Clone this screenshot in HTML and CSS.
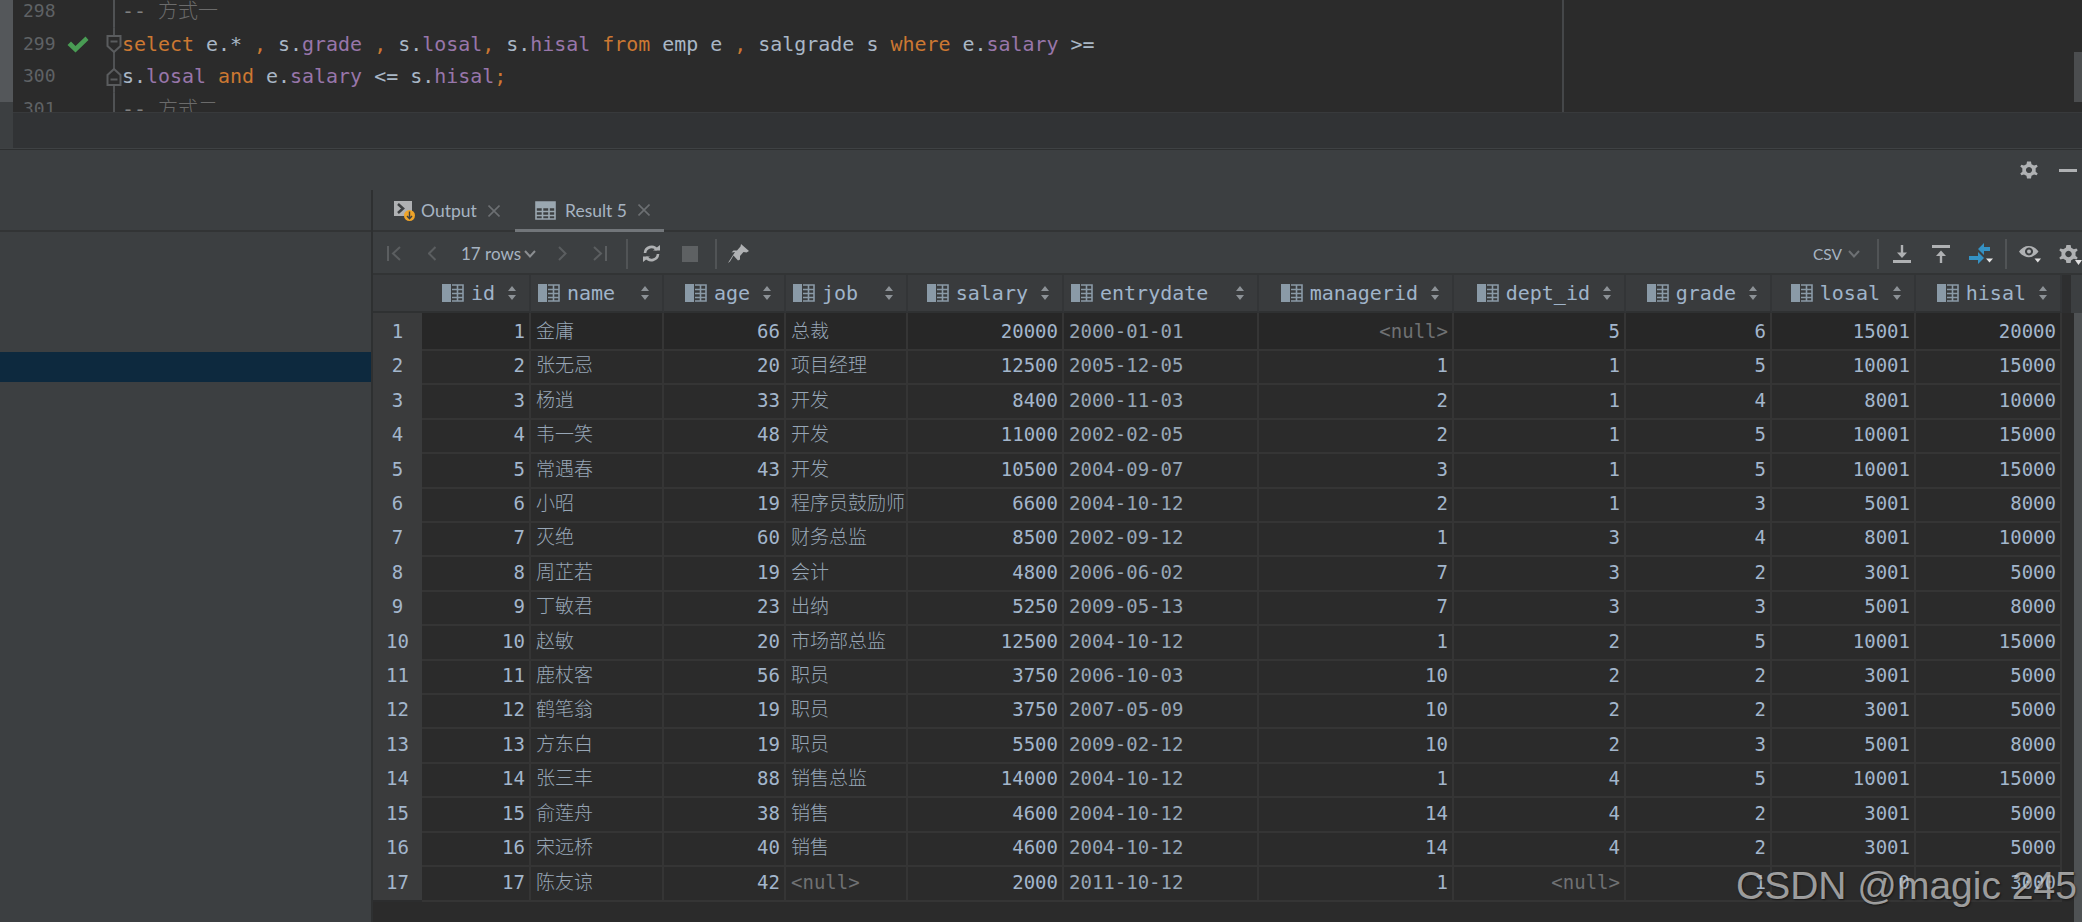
FILE: index.html
```html
<!DOCTYPE html>
<html lang="zh">
<head>
<meta charset="utf-8">
<title>Result 5</title>
<link rel="stylesheet" href="styles.css">
</head>
<body>
<svg class="defs" width="0" height="0" aria-hidden="true">
  <symbol id="col" viewBox="0 0 22 18">
    <rect x="0" y="0" width="9" height="18" fill="#8a9aa7"/>
    <path d="M10 1H21V17H10M10 5.5H21M10 9.5H21M10 13.5H21M15.5 1V17" fill="none" stroke="#8a9aa7" stroke-width="1.6"/>
  </symbol>
  <symbol id="sort" viewBox="0 0 8 14">
    <path d="M4 0L8 5H0ZM4 14L0 9H8Z" fill="#8c9196"/>
  </symbol>
  <symbol id="gear" viewBox="0 0 20 20">
    <g fill="#afb1b3">
      <path d="M10 0.5l2.2 0 .6 3 2.8 1.6 2.9-1 1.2 2-2.3 2 0 3.8 2.3 2-1.2 2-2.9-1-2.8 1.6-.6 3-4.4 0-.6-3-2.8-1.6-2.9 1-1.2-2 2.3-2 0-3.8-2.3-2 1.2-2 2.9 1 2.8-1.6.6-3z M10 6.6a3.4 3.4 0 1 0 .01 0z" fill-rule="evenodd"/>
    </g>
  </symbol>
</svg>

<section class="top">
  <div class="strip"><div class="strip-thumb"></div></div>
  <div class="top-main">
    <div class="editor">
      <div class="lines">
        <div class="line"><span class="ln">298</span><span class="mark"></span><span class="fold"></span><code class="code"><span class="cm">-- </span><span class="cmz">方式一</span></code></div>
        <div class="line"><span class="ln">299</span><span class="mark"><svg class="check" width="22" height="17" viewBox="0 0 22 17"><path d="M0.5 9L4 5.5L8.5 10L18.5 0.5L21.5 4L8.5 16.5Z" fill="#499c54"/></svg></span><span class="fold"><svg class="fold-ic" width="16" height="18" viewBox="0 0 16 18"><path d="M1.5 1H14.5V11L8 17L1.5 11Z M4.5 6.5H11.5" fill="#2b2b2b" stroke="#5a5c5e" stroke-width="2"/></svg></span><code class="code"><span class="kw">select</span> e.* <span class="kw">,</span> s.<span class="col">grade</span> <span class="kw">,</span> s.<span class="col">losal</span><span class="kw">,</span> s.<span class="col">hisal</span> <span class="kw">from</span> emp e <span class="kw">,</span> salgrade s <span class="kw">where</span> e.<span class="col">salary</span> &gt;=</code></div>
        <div class="line"><span class="ln">300</span><span class="mark"></span><span class="fold"><svg class="fold-ic" width="16" height="18" viewBox="0 0 16 18"><path d="M8 1L14.5 7V17H1.5V7Z M4.5 11.5H11.5" fill="#2b2b2b" stroke="#5a5c5e" stroke-width="2"/></svg></span><code class="code">s.<span class="col">losal</span> <span class="kw">and</span> e.<span class="col">salary</span> &lt;= s.<span class="col">hisal</span><span class="kw">;</span></code></div>
        <div class="line"><span class="ln">301</span><span class="mark"></span><span class="fold"></span><code class="code"><span class="cm">-- </span><span class="cmz">方式二</span></code></div>
      </div>
      <div class="margin-line"></div>
      <div class="ed-thumb"></div>
    </div>
    <div class="band"></div>
  </div>
</section>

<section class="panel">
  <div class="panel-bar">
    <svg class="pb-gear" width="18" height="20"><use href="#gear"/></svg>
    <span class="pb-min"></span>
  </div>
  <div class="panel-body">
    <aside class="side">
      <div class="side-head"></div>
      <div class="side-list"><div class="side-sel"></div></div>
    </aside>
    <main class="results">
      <nav class="tabs">
        <div class="tab tab-output">
          <svg width="21" height="20" viewBox="0 0 21 20"><rect x="0" y="0" width="18" height="15" fill="#afb1b3"/><path d="M4 3L9 7.5L4 12" fill="none" stroke="#3c3f41" stroke-width="2.6"/><circle cx="15.5" cy="14.5" r="5.5" fill="#eea429"/><path d="M15.5 10.5V17.5M13 15L15.5 17.7L18 15" fill="none" stroke="#3c3f41" stroke-width="1.4"/></svg>
          <span class="tab-label">Output</span>
          <svg class="tab-x" width="12" height="12" viewBox="0 0 12 12"><path d="M0.5 0.5L11.5 11.5M11.5 0.5L0.5 11.5" stroke="#6c6f72" stroke-width="1.6"/></svg>
        </div>
        <div class="tab tab-result">
          <svg width="21" height="19" viewBox="0 0 21 19"><path d="M1 1H20V18H1ZM1 6.5H20M1 10.5H20M1 14.5H20M7.5 6.5V18M14 6.5V18" fill="none" stroke="#9aa7b0" stroke-width="1.6"/><rect x="1" y="1" width="19" height="5" fill="#9aa7b0"/></svg>
          <span class="tab-label">Result 5</span>
          <svg class="tab-x" width="12" height="12" viewBox="0 0 12 12"><path d="M0.5 0.5L11.5 11.5M11.5 0.5L0.5 11.5" stroke="#6c6f72" stroke-width="1.6"/></svg>
        </div>
      </nav>
      <div class="toolbar">
        <svg class="t-first" width="14" height="15" viewBox="0 0 14 15"><path d="M1 0V15M13 1L6 7.5L13 14" fill="none" stroke="#5b5e60" stroke-width="2"/></svg>
        <svg class="t-prev" width="8" height="15" viewBox="0 0 8 15"><path d="M7.5 1L1 7.5L7.5 14" fill="none" stroke="#5b5e60" stroke-width="2"/></svg>
        <span class="t-rows">17 rows</span>
        <svg class="t-caret" width="12" height="8" viewBox="0 0 12 8"><path d="M1 1L6 6.5L11 1" fill="none" stroke="#8b8e91" stroke-width="2"/></svg>
        <svg class="t-next" width="9" height="15" viewBox="0 0 9 15"><path d="M1 1L7.5 7.5L1 14" fill="none" stroke="#5b5e60" stroke-width="2"/></svg>
        <svg class="t-last" width="14" height="15" viewBox="0 0 14 15"><path d="M13 0V15M1 1L8 7.5L1 14" fill="none" stroke="#5b5e60" stroke-width="2"/></svg>
        <span class="t-sep t-sep-a"></span>
        <svg class="t-refresh" width="19" height="17" viewBox="0 0 19 17"><path d="M3 8A6.5 6.5 0 0 1 15 5M16 9A6.5 6.5 0 0 1 4 12" fill="none" stroke="#afb1b3" stroke-width="2.6"/><path d="M11 5.5H18V0ZM8 11.5H1V17Z" fill="#afb1b3"/></svg>
        <span class="t-stop"></span>
        <span class="t-sep t-sep-b"></span>
        <svg class="t-pin" width="21" height="19" viewBox="0 0 21 19"><path d="M13 0L21 7L18.5 8.5L15.5 8L12 12L12 15.5L10 16.5L5.5 11.5L2 17.5L0 19L1.5 16.5L7 8L3.5 8.5L5.5 6.500L9 6.500L12.500 2.500Z" fill="#afb1b3"/></svg>
        <span class="t-csv">CSV</span>
        <svg class="t-caret t-caret-csv" width="12" height="8" viewBox="0 0 12 8"><path d="M1 1L6 6.5L11 1" fill="none" stroke="#6d7073" stroke-width="2"/></svg>
        <span class="t-sep t-sep-c"></span>
        <svg class="t-down" width="18" height="18" viewBox="0 0 18 18"><path d="M0 16.500H18" stroke="#afb1b3" stroke-width="3"/><path d="M9 0V10" stroke="#afb1b3" stroke-width="2.400"/><path d="M4 7.500H14L9 13Z" fill="#afb1b3"/></svg>
        <svg class="t-up" width="18" height="18" viewBox="0 0 18 18"><path d="M0 1.500H18" stroke="#afb1b3" stroke-width="3"/><path d="M9 8V18" stroke="#afb1b3" stroke-width="2.400"/><path d="M4 11H14L9 5.500Z" fill="#afb1b3"/></svg>
        <svg class="t-cmp" width="24" height="22" viewBox="0 0 24 22"><path d="M15 0V4H21V8H15V12L9 6ZM9 9V13H0V17H9V21L15 15Z" fill="#3592c4"/><path d="M17 15.500H24L20.500 19.500Z" fill="#e6e6e6"/></svg>
        <span class="t-sep t-sep-d"></span>
        <svg class="t-eye" width="22" height="19" viewBox="0 0 22 19"><path d="M0 7.500C5 0 14 0 19.500 7.500C14 15 5 15 0 7.500Z M10 3.500A4 4 0 1 0 10.010 3.500Z" fill="#afb1b3" fill-rule="evenodd"/><circle cx="10" cy="7.500" r="2" fill="#afb1b3"/><path d="M15.500 14.500H22L18.750 18.500Z" fill="#e0e0e0"/></svg>
        <span class="t-gear"><svg width="19" height="20"><use href="#gear"/></svg><svg class="t-gear-c" width="7" height="5" viewBox="0 0 7 5"><path d="M0 0H7L3.500 5Z" fill="#e0e0e0"/></svg></span>
      </div>
      <div class="data-area">
        <div class="data">
          <div class="row head">
            <div class="corner"></div>
            <div class="hc r"><svg class="ci"><use href="#col"/></svg><span>id</span><svg class="si"><use href="#sort"/></svg></div>
            <div class="hc l"><svg class="ci"><use href="#col"/></svg><span>name</span><svg class="si"><use href="#sort"/></svg></div>
            <div class="hc r"><svg class="ci"><use href="#col"/></svg><span>age</span><svg class="si"><use href="#sort"/></svg></div>
            <div class="hc l"><svg class="ci"><use href="#col"/></svg><span>job</span><svg class="si"><use href="#sort"/></svg></div>
            <div class="hc r"><svg class="ci"><use href="#col"/></svg><span>salary</span><svg class="si"><use href="#sort"/></svg></div>
            <div class="hc l"><svg class="ci"><use href="#col"/></svg><span>entrydate</span><svg class="si"><use href="#sort"/></svg></div>
            <div class="hc r"><svg class="ci"><use href="#col"/></svg><span>managerid</span><svg class="si"><use href="#sort"/></svg></div>
            <div class="hc r"><svg class="ci"><use href="#col"/></svg><span>dept_id</span><svg class="si"><use href="#sort"/></svg></div>
            <div class="hc r"><svg class="ci"><use href="#col"/></svg><span>grade</span><svg class="si"><use href="#sort"/></svg></div>
            <div class="hc r"><svg class="ci"><use href="#col"/></svg><span>losal</span><svg class="si"><use href="#sort"/></svg></div>
            <div class="hc r"><svg class="ci"><use href="#col"/></svg><span>hisal</span><svg class="si"><use href="#sort"/></svg></div>
          </div>
          <div class="row first"><div class="rh">1</div><div class="c n">1</div><div class="c">金庸</div><div class="c n">66</div><div class="c">总裁</div><div class="c n">20000</div><div class="c">2000-01-01</div><div class="c n nl">&lt;null&gt;</div><div class="c n">5</div><div class="c n">6</div><div class="c n">15001</div><div class="c n">20000</div></div>
          <div class="row"><div class="rh">2</div><div class="c n">2</div><div class="c">张无忌</div><div class="c n">20</div><div class="c">项目经理</div><div class="c n">12500</div><div class="c">2005-12-05</div><div class="c n">1</div><div class="c n">1</div><div class="c n">5</div><div class="c n">10001</div><div class="c n">15000</div></div>
          <div class="row"><div class="rh">3</div><div class="c n">3</div><div class="c">杨逍</div><div class="c n">33</div><div class="c">开发</div><div class="c n">8400</div><div class="c">2000-11-03</div><div class="c n">2</div><div class="c n">1</div><div class="c n">4</div><div class="c n">8001</div><div class="c n">10000</div></div>
          <div class="row"><div class="rh">4</div><div class="c n">4</div><div class="c">韦一笑</div><div class="c n">48</div><div class="c">开发</div><div class="c n">11000</div><div class="c">2002-02-05</div><div class="c n">2</div><div class="c n">1</div><div class="c n">5</div><div class="c n">10001</div><div class="c n">15000</div></div>
          <div class="row"><div class="rh">5</div><div class="c n">5</div><div class="c">常遇春</div><div class="c n">43</div><div class="c">开发</div><div class="c n">10500</div><div class="c">2004-09-07</div><div class="c n">3</div><div class="c n">1</div><div class="c n">5</div><div class="c n">10001</div><div class="c n">15000</div></div>
          <div class="row"><div class="rh">6</div><div class="c n">6</div><div class="c">小昭</div><div class="c n">19</div><div class="c">程序员鼓励师</div><div class="c n">6600</div><div class="c">2004-10-12</div><div class="c n">2</div><div class="c n">1</div><div class="c n">3</div><div class="c n">5001</div><div class="c n">8000</div></div>
          <div class="row"><div class="rh">7</div><div class="c n">7</div><div class="c">灭绝</div><div class="c n">60</div><div class="c">财务总监</div><div class="c n">8500</div><div class="c">2002-09-12</div><div class="c n">1</div><div class="c n">3</div><div class="c n">4</div><div class="c n">8001</div><div class="c n">10000</div></div>
          <div class="row"><div class="rh">8</div><div class="c n">8</div><div class="c">周芷若</div><div class="c n">19</div><div class="c">会计</div><div class="c n">4800</div><div class="c">2006-06-02</div><div class="c n">7</div><div class="c n">3</div><div class="c n">2</div><div class="c n">3001</div><div class="c n">5000</div></div>
          <div class="row"><div class="rh">9</div><div class="c n">9</div><div class="c">丁敏君</div><div class="c n">23</div><div class="c">出纳</div><div class="c n">5250</div><div class="c">2009-05-13</div><div class="c n">7</div><div class="c n">3</div><div class="c n">3</div><div class="c n">5001</div><div class="c n">8000</div></div>
          <div class="row"><div class="rh">10</div><div class="c n">10</div><div class="c">赵敏</div><div class="c n">20</div><div class="c">市场部总监</div><div class="c n">12500</div><div class="c">2004-10-12</div><div class="c n">1</div><div class="c n">2</div><div class="c n">5</div><div class="c n">10001</div><div class="c n">15000</div></div>
          <div class="row"><div class="rh">11</div><div class="c n">11</div><div class="c">鹿杖客</div><div class="c n">56</div><div class="c">职员</div><div class="c n">3750</div><div class="c">2006-10-03</div><div class="c n">10</div><div class="c n">2</div><div class="c n">2</div><div class="c n">3001</div><div class="c n">5000</div></div>
          <div class="row"><div class="rh">12</div><div class="c n">12</div><div class="c">鹤笔翁</div><div class="c n">19</div><div class="c">职员</div><div class="c n">3750</div><div class="c">2007-05-09</div><div class="c n">10</div><div class="c n">2</div><div class="c n">2</div><div class="c n">3001</div><div class="c n">5000</div></div>
          <div class="row"><div class="rh">13</div><div class="c n">13</div><div class="c">方东白</div><div class="c n">19</div><div class="c">职员</div><div class="c n">5500</div><div class="c">2009-02-12</div><div class="c n">10</div><div class="c n">2</div><div class="c n">3</div><div class="c n">5001</div><div class="c n">8000</div></div>
          <div class="row"><div class="rh">14</div><div class="c n">14</div><div class="c">张三丰</div><div class="c n">88</div><div class="c">销售总监</div><div class="c n">14000</div><div class="c">2004-10-12</div><div class="c n">1</div><div class="c n">4</div><div class="c n">5</div><div class="c n">10001</div><div class="c n">15000</div></div>
          <div class="row"><div class="rh">15</div><div class="c n">15</div><div class="c">俞莲舟</div><div class="c n">38</div><div class="c">销售</div><div class="c n">4600</div><div class="c">2004-10-12</div><div class="c n">14</div><div class="c n">4</div><div class="c n">2</div><div class="c n">3001</div><div class="c n">5000</div></div>
          <div class="row"><div class="rh">16</div><div class="c n">16</div><div class="c">宋远桥</div><div class="c n">40</div><div class="c">销售</div><div class="c n">4600</div><div class="c">2004-10-12</div><div class="c n">14</div><div class="c n">4</div><div class="c n">2</div><div class="c n">3001</div><div class="c n">5000</div></div>
          <div class="row"><div class="rh">17</div><div class="c n">17</div><div class="c">陈友谅</div><div class="c n">42</div><div class="c nl">&lt;null&gt;</div><div class="c n">2000</div><div class="c">2011-10-12</div><div class="c n">1</div><div class="c n nl">&lt;null&gt;</div><div class="c n">1</div><div class="c n">0</div><div class="c n">3000</div></div>
        </div>
        <div class="sb"><div class="sb-head"></div><div class="sb-track"></div></div>
      </div>
    </main>
  </div>
</section>
<div class="watermark">CSDN @magic 245</div>
</body>
</html>
```
FILE: styles.css
```css
* { box-sizing: border-box; }
html { margin: 0; height: 922px; overflow: hidden; }
body {
  margin: 0;
  position: relative;
  width: 2082px;
  height: 922px;
  overflow: hidden;
  background: #3c3f41;
  display: flex;
  flex-direction: column;
  font-family: "DejaVu Sans Mono", "Noto Sans CJK SC", monospace;
  color: #a3b6cc;
}
.defs { position: absolute; }

/* editor */
.top {
  display: flex;
  height: 149px;
  flex: none;
  border-bottom: 1px solid #3f4244;
}
.strip { width: 13px; flex: none; background: #3c3f41; }
.strip-thumb { height: 102px; background: #54575a; }
.top-main { flex: 1; display: flex; flex-direction: column; min-width: 0; }
.editor {
  position: relative;
  height: 113px;
  flex: none;
  overflow: hidden;
  background: #2b2b2b;
  border-bottom: 1px solid #383a3c;
}
.lines { margin-top: -5px; }
.line { display: flex; height: 32.7px; line-height: 32.7px; }
.ln {
  width: 52px;
  flex: none;
  padding-left: 10px;
  font-size: 18px;
  color: #5f6265;
}
.mark { width: 41px; flex: none; display: flex; align-items: center; padding-left: 2px; }
.fold {
  position: relative;
  width: 16px;
  flex: none;
  display: flex;
  align-items: center;
  background: linear-gradient(#505254, #505254) center / 2px 100% no-repeat;
}
.fold-ic { display: block; }
.code {
  font-family: inherit;
  font-size: 19.95px;
  white-space: pre;
  color: #a9b7c6;
}
.kw { color: #cc7832; }
.col { color: #9876aa; }
.cm { color: #808080; }
.cmz { color: #6b6b6b; font-weight: 300; }
.margin-line {
  position: absolute;
  left: 1549px;
  top: 0;
  bottom: 0;
  width: 2px;
  background: #454749;
}
.ed-thumb {
  position: absolute;
  right: 0;
  top: 52px;
  width: 8px;
  height: 50px;
  background: #4b4d4f;
}
.band { flex: 1; background: #313335; }

/* panel */
.panel {
  flex: 1;
  min-height: 0;
  display: flex;
  flex-direction: column;
  background: #3c3f41;
  border-top: 1px solid #2d2f30;
}
.panel-bar {
  height: 40px;
  flex: none;
  display: flex;
  align-items: center;
  justify-content: flex-end;
}
.pb-gear { margin-right: 21px; }
.pb-min { width: 18px; height: 3px; background: #afb1b3; margin-right: 5px; }
.panel-body { flex: 1; display: flex; min-height: 0; }
.side {
  width: 373px;
  flex: none;
  border-right: 2px solid #2e3031;
}
.side-head { height: 42px; border-bottom: 2px solid #323435; }
.side-list { padding-top: 120px; }
.side-sel { height: 30px; background: #0d293e; }
.results { flex: 1; min-width: 0; display: flex; flex-direction: column; }

/* tabs */
.tabs {
  height: 42px;
  flex: none;
  display: flex;
  border-bottom: 2px solid #323435;
  font-family: Lato, "Liberation Sans", sans-serif;
}
.tab { display: flex; align-items: center; font-size: 17.5px; color: #a7b4c2; padding-top: 1px; }
.tab-output { width: 142px; padding-left: 21px; }
.tab-output .tab-label { margin-left: 6px; }
.tab-output .tab-x { margin-left: 11px; }
.tab-result {
  width: 149px;
  padding-left: 20px;
  margin-bottom: -2px;
  border-bottom: 3px solid #72767a;
}
.tab-result .tab-label { margin-left: 9px; }
.tab-result .tab-x { margin-left: 11px; }

/* toolbar */
.toolbar {
  height: 43px;
  flex: none;
  display: flex;
  align-items: center;
  padding-top: 2px;
  border-bottom: 2px solid #323435;
  font-family: Lato, "Liberation Sans", sans-serif;
  font-size: 17px;
  color: #a7b4c2;
}
.t-first { margin-left: 14px; }
.t-prev { margin-left: 27px; }
.t-rows { margin-left: 25px; width: 56px; white-space: nowrap; }
.t-caret { margin-left: 7px; }
.t-next { margin-left: 22px; }
.t-last { margin-left: 26px; }
.t-sep { width: 2px; height: 30px; background: #515456; }
.t-sep-a { margin-left: 19px; }
.t-refresh { margin-left: 14px; }
.t-stop { width: 16px; height: 16px; margin-left: 21px; background: #5e6163; }
.t-sep-b { margin-left: 17px; }
.t-pin { margin-left: 11px; }
.t-csv { margin-left: auto; width: 29px; white-space: nowrap; font-size: 15.5px; }
.t-caret-csv { margin-left: 6px; }
.t-sep-c { margin-left: 17px; }
.t-down { margin-left: 14px; }
.t-up { margin-left: 21px; }
.t-cmp { margin-left: 19px; }
.t-sep-d { margin-left: 12px; }
.t-eye { margin-left: 12px; }
.t-gear { position: relative; width: 23px; height: 20px; margin-left: 18px; }
.t-gear svg { display: block; }
.t-gear .t-gear-c { position: absolute; right: 0; bottom: -1px; }

/* data grid */
.data-area { flex: 1; min-height: 0; display: flex; background: #2b2b2b; }
.data { width: 1689px; flex: none; }
.row {
  display: grid;
  grid-template-columns: 49px 109px 133px 122px 122px 156px 195px 195px 172px 146px 144px 146px;
  height: 34.41px;
  font-size: 19px;
  line-height: 35px;
}
.head { height: 38px; background: #393b3d; color: #a0b4ca; font-size: 20px; line-height: 36px; }
.corner { border-bottom: 2px solid #2f3132; }
.hc {
  display: flex;
  align-items: center;
  padding-right: 13px;
  border-right: 2px solid #333537;
  border-bottom: 2px solid #2f3132;
}
.hc.r { justify-content: flex-end; }
.hc.l { padding-left: 7px; }
.hc.l .si { margin-left: auto; }
.ci { width: 22px; height: 18px; margin-right: 7px; flex: none; }
.si { width: 8px; height: 14px; margin-left: 13px; flex: none; }
.rh {
  background: #3a3b3c;
  border-bottom: 2px solid #2c2d2e;
  text-align: center;
  padding-top: 1px;
}
.c {
  padding: 1px 5px 0 5px;
  border-right: 2px solid #353535;
  border-bottom: 2px solid #353535;
  overflow: hidden;
  white-space: nowrap;
  color: #97a6b6;
  font-weight: 300;
}
.first .c { background: #272727; }
.c.n { text-align: right; color: #a3b6cc; font-weight: 400; padding-right: 4px; }
.c.nl { color: #6f7173; }
.sb { flex: 1; display: flex; flex-direction: column; }
.sb-head { height: 38px; flex: none; background: #3c3f41; border-left: 9px solid #2e2f30; }
.sb-track { flex: 1; background: #4f5254; border-left: 12px solid #2b2b2b; }

.watermark {
  position: absolute;
  left: 1736px;
  top: 863px;
  font-family: "Liberation Sans", Arial, sans-serif;
  font-size: 39px;
  line-height: 46px;
  white-space: nowrap;
  color: rgba(225, 225, 225, 0.66);
  text-shadow: 1px 1px 2px rgba(0, 0, 0, 0.5);
}
```
